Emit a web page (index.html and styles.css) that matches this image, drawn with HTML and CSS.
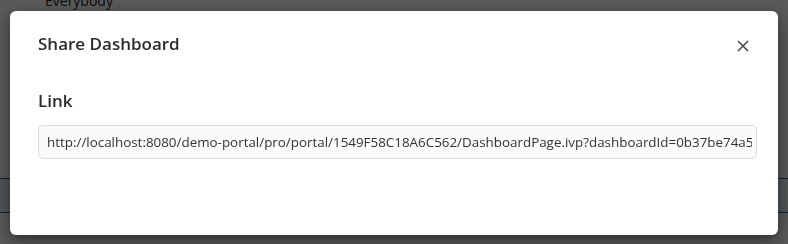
FILE: index.html
```html
<!DOCTYPE html>
<html lang="en">
<head>
    <meta charset="UTF-8">
    <meta name="viewport" content="width=device-width, initial-scale=1.0">
    <title>Share Dashboard</title>
    <link rel="stylesheet" href="styles.css">
</head>
<body>
    <div class="page">
        <p class="page-user">Everybody</p>
        <div class="page-band"></div>
    </div>
    <div class="backdrop">
        <div class="modal">
            <div class="modal-header">
                <h2 class="modal-title">Share Dashboard</h2>
                <button class="close-btn" aria-label="Close">
                    <svg width="12" height="12" viewBox="0 0 12 12">
                        <path d="M1 1 L11 11 M11 1 L1 11" stroke="#444" stroke-width="1.5" fill="none"/>
                    </svg>
                </button>
            </div>
            <div class="modal-body">
                <label class="field-label">Link</label>
                <input class="link-input" type="text" readonly value="http://localhost:8080/demo-portal/pro/portal/1549F58C18A6C562/DashboardPage.ivp?dashboardId=0b37be74a5c84f1e9d2a">
            </div>
        </div>
    </div>
</body>
</html>
```

FILE: styles.css
```css
*{
    margin: 0px;
    box-sizing: border-box;
}
body{
    background-color: white;
    font-family: "Open Sans", "Noto Sans", sans-serif;
    color: #333;
    overflow: hidden;
}
.page{
    height: 244px;
}
.page-user{
    margin-top: -9px;
    padding-left: 45px;
    font-size: 14px;
    color: #222;
}
.page-band{
    margin-top: 168px;
    height: 35px;
    background-color: #e6f1f6;
    border-top: 1px solid #0c6b96;
    border-bottom: 1px solid #0c6b96;
}
.backdrop{
    position: fixed;
    top: 0;
    left: 0;
    right: 0;
    bottom: 0;
    background-color: rgba(0, 0, 0, 0.65);
    padding: 11px 10px 9px 10px;
}
.modal{
    height: 224px;
    background-color: white;
    border-radius: 6px;
    box-shadow: 0 5px 15px rgba(0, 0, 0, 0.5);
    padding: 21px 21px 0 28px;
}
.modal-header{
    display: flex;
    justify-content: space-between;
    align-items: flex-start;
}
.modal-title{
    font-size: 17px;
    font-weight: 600;
    line-height: 23px;
    color: #2b2b2b;
}
.close-btn{
    border: none;
    background: none;
    padding: 0;
    width: 12px;
    height: 12px;
    margin-top: 8px;
    margin-right: 8px;
    display: flex;
    cursor: pointer;
}
.modal-body{
    padding-top: 34px;
}
.field-label{
    display: block;
    font-size: 17px;
    font-weight: 600;
    line-height: 23px;
    margin-bottom: 13px;
    color: #2b2b2b;
}
.link-input{
    display: block;
    width: 100%;
    height: 34px;
    border: 1px solid #dcdcdc;
    border-radius: 5px;
    background-color: #fafafa;
    padding: 0 4px 0 8px;
    font-family: "Open Sans", "Noto Sans", sans-serif;
    font-size: 13.4px;
    color: #333;
    outline: none;
}
```
